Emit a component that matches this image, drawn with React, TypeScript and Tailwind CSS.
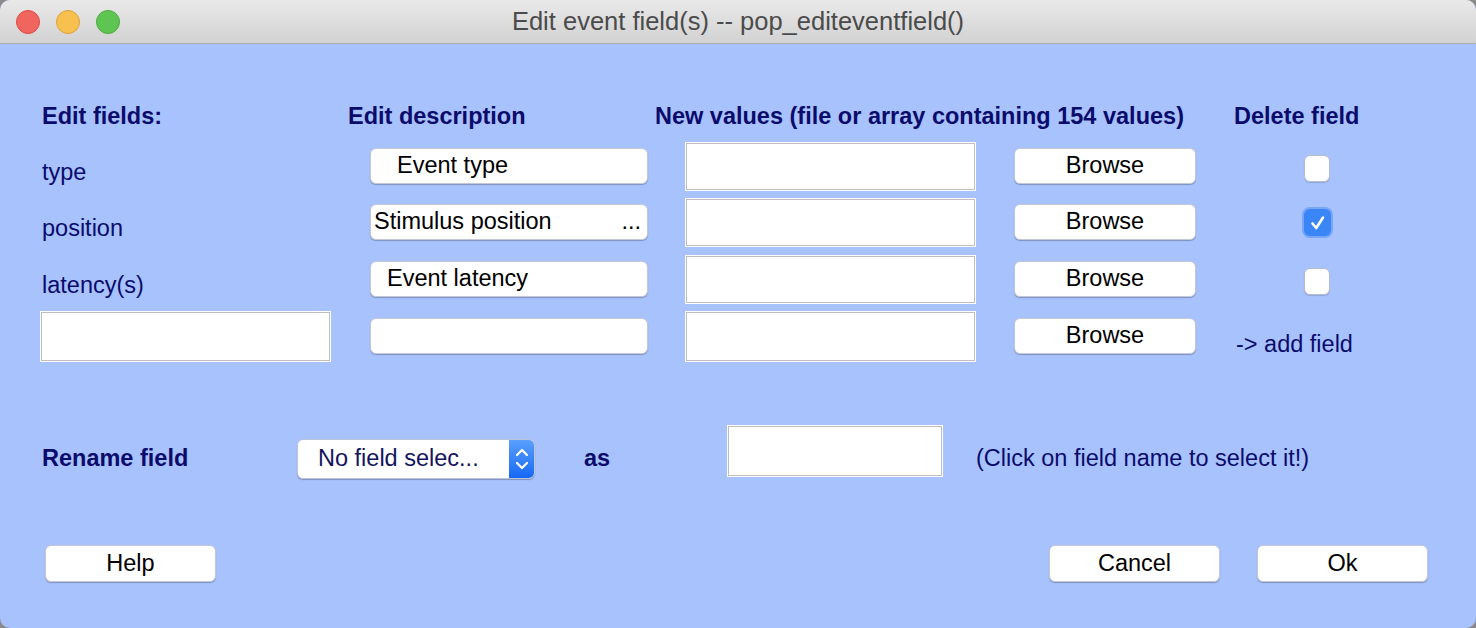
const font = "font-['Liberation_Sans',Arial,sans-serif]";

const rows = [
  { name: "type", desc: "Event type", descPad: "pl-[26px]", checked: false, h: "h-[56px]" },
  { name: "position", desc: "Stimulus position", descPad: "pl-[3px]", dots: true, checked: true, h: "h-[57px]" },
  { name: "latency(s)", desc: "Event latency", descPad: "pl-[16px]", checked: false, h: "h-[56px]" },
];

function PushButton({ label, className = "" }: { label: string; className?: string }) {
  return (
    <div
      className={`flex items-center justify-center rounded-[6px] border border-[#c3c7d6] bg-white text-[23.5px] text-black shadow-[0_1px_1px_rgba(0,0,0,0.25)] ${className}`}
    >
      {label}
    </div>
  );
}

function TextBox({ className = "" }: { className?: string }) {
  return <div className={`border border-[#bebebe] bg-white shadow-[0_0_0_1px_#ffffff] ${className}`} />;
}

function CheckBox({ checked }: { checked: boolean }) {
  if (checked) {
    return (
      <div className="flex h-[27px] w-[27px] items-center justify-center rounded-[6px] bg-[#3a86f7] shadow-[0_0_0_2px_#78a6f4]">
        <svg width="20" height="20" viewBox="0 0 20 20">
          <path d="M4.5 10.5 L8.3 15 L15 4.5" fill="none" stroke="white" strokeWidth="2.6" strokeLinecap="round" strokeLinejoin="round" />
        </svg>
      </div>
    );
  }
  return <div className="h-[27px] w-[26px] rounded-[6px] border border-[#b9bccb] bg-white shadow-[0_1px_1px_rgba(0,0,0,0.15)]" />;
}

export default function App() {
  return (
    <div className={`h-[628px] w-[1476px] overflow-hidden bg-[#8a8a8a] ${font}`}>
      <div className="flex h-full flex-col overflow-hidden rounded-[10px] bg-[#a7c2fd]">
        {/* title bar */}
        <div className="relative flex h-[44px] shrink-0 items-center justify-center border-b border-[#aeaeae] bg-gradient-to-b from-[#e9e9e9] to-[#d2d2d2]">
          <div className="absolute left-[16px] top-[10px] flex gap-[16px]">
            <span className="h-[24px] w-[24px] rounded-full border border-[#de4a42] bg-[#f0655d]" />
            <span className="h-[24px] w-[24px] rounded-full border border-[#dca23a] bg-[#f8c14f]" />
            <span className="h-[24px] w-[24px] rounded-full border border-[#4caa3e] bg-[#5ec452]" />
          </div>
          <span className="text-[25.5px] text-[#4b4b4b]">Edit event field(s) -- pop_editeventfield()</span>
        </div>

        {/* headers */}
        <div className="mt-[60px] flex h-[24px] items-center text-[23.5px] font-bold leading-[24px] text-[#0b0b6b]">
          <div className="w-[348px] pl-[42px]">Edit fields:</div>
          <div className="w-[307px]">Edit description</div>
          <div className="w-[579px]">New values (file or array containing 154 values)</div>
          <div>Delete field</div>
        </div>

        {/* field rows */}
        <div className="mt-[15px] flex flex-col">
          {rows.map((r) => (
            <div key={r.name} className={`flex items-start ${r.h}`}>
              <div className="mt-[17px] w-[370px] pl-[42px] text-[23.5px] leading-[24px] text-[#0b0b6b]">{r.name}</div>
              <div className="w-[316px] pt-[5px]">
                <div
                  className={`flex h-[36px] w-[278px] items-center justify-between rounded-[6px] border border-[#c3c7d6] bg-white pr-[6px] text-[23.5px] text-black shadow-[0_1px_1px_rgba(0,0,0,0.25)] ${r.descPad}`}
                >
                  <span>{r.desc}</span>
                  {r.dots && <span>...</span>}
                </div>
              </div>
              <div className="w-[328px]">
                <TextBox className="h-[47px] w-[289px]" />
              </div>
              <div className="w-[290px] pt-[5px]">
                <PushButton label="Browse" className="h-[36px] w-[182px]" />
              </div>
              <div className={r.checked ? "pt-[10px]" : "pt-[12px]"}>
                <CheckBox checked={r.checked} />
              </div>
            </div>
          ))}
          <div className="flex h-[49px] items-start">
            <div className="w-[370px] pl-[41px]">
              <TextBox className="h-[49px] w-[289px]" />
            </div>
            <div className="w-[316px] pt-[6px]">
              <div className="h-[36px] w-[278px] rounded-[6px] border border-[#c3c7d6] bg-white shadow-[0_1px_1px_rgba(0,0,0,0.25)]" />
            </div>
            <div className="w-[328px]">
              <TextBox className="h-[49px] w-[289px]" />
            </div>
            <div className="w-[222px] pt-[6px]">
              <PushButton label="Browse" className="h-[36px] w-[182px]" />
            </div>
            <div className="mt-[20px] text-[23.5px] leading-[24px] text-[#0b0b6b]">-&gt; add field</div>
          </div>
        </div>

        {/* rename row */}
        <div className="mt-[65px] flex h-[50px] items-start text-[#0b0b6b]">
          <div className="mt-[20px] w-[297px] pl-[42px] text-[23.5px] font-bold leading-[24px]">Rename field</div>
          <div className="mt-[13px] flex h-[40px] w-[238px] overflow-hidden rounded-[6px] border border-[#bfc4d6] bg-white shadow-[0_1px_1px_rgba(0,0,0,0.25)]">
            <div className="flex flex-1 items-center pl-[20px] text-[23.5px] text-[#14145e]">No field selec...</div>
            <div className="flex w-[25px] items-center justify-center bg-gradient-to-b from-[#5a9ffb] to-[#1467f5]">
              <svg width="16" height="28" viewBox="0 0 16 28">
                <path d="M3 10 L8 5 L13 10" fill="none" stroke="white" strokeWidth="2.2" strokeLinecap="round" strokeLinejoin="round" />
                <path d="M3 18 L8 23 L13 18" fill="none" stroke="white" strokeWidth="2.2" strokeLinecap="round" strokeLinejoin="round" />
              </svg>
            </div>
          </div>
          <div className="mt-[20px] w-[193px] pl-[49px] text-[23.5px] font-bold leading-[24px]">as</div>
          <TextBox className="h-[50px] w-[214px]" />
          <div className="ml-[34px] mt-[20px] text-[23.5px] leading-[24px]">(Click on field name to select it!)</div>
        </div>

        {/* bottom buttons */}
        <div className="mt-[69px] flex items-start pl-[45px] pr-[48px]">
          <PushButton label="Help" className="h-[37px] w-[171px]" />
          <div className="flex-1" />
          <PushButton label="Cancel" className="h-[37px] w-[171px]" />
          <PushButton label="Ok" className="ml-[37px] h-[37px] w-[171px]" />
        </div>
      </div>
    </div>
  );
}
